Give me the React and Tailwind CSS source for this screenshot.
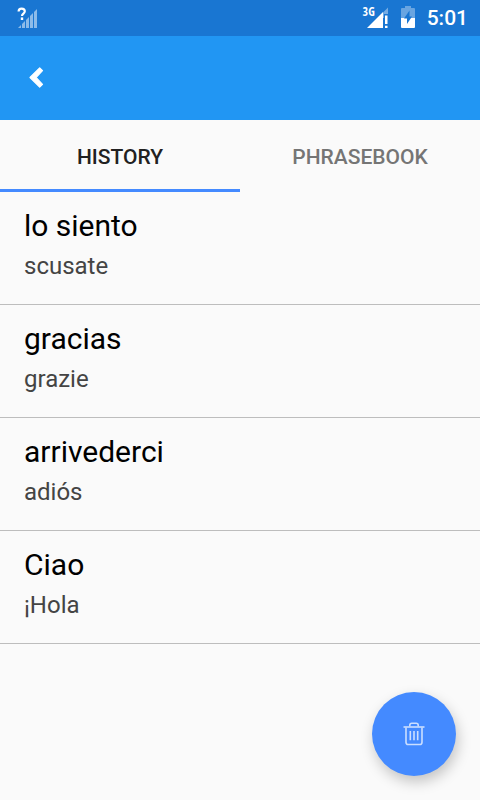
const entries = [
  { source: 'lo siento', translation: 'scusate' },
  { source: 'gracias', translation: 'grazie' },
  { source: 'arrivederci', translation: 'adiós' },
  { source: 'Ciao', translation: '¡Hola' },
];

function UnknownSignalIcon() {
  return (
    <svg width="24" height="24" viewBox="0 0 24 24" aria-hidden="true">
      <g fill="#fff" fillOpacity="0.5">
        <path d="M2 22 5 19V22Z" />
        <path d="M6 18 9 15V22H6Z" />
        <path d="M10 14 13 11V22H10Z" />
        <path d="M14 10 17 7V22H14Z" />
        <path d="M18 6 21 3V22H18Z" />
      </g>
      <path d="M2.6 5.6C2.6 3.4 3.8 2.6 5.6 2.6S8.8 3.5 8.8 5.3C8.8 7.6 6 7.6 6 10" fill="none" stroke="#fff" strokeWidth="2.2" />
      <rect x="4.8" y="11.4" width="2.4" height="2.6" fill="#fff" />
    </svg>
  );
}

function MobileSignalIcon() {
  return (
    <svg width="22" height="24" viewBox="0 0 22 24" aria-hidden="true">
      <path d="M16 6.5 21 1.5V8H17V12H16Z" fill="#fff" fillOpacity="0.4" />
      <path d="M0 22 16 6V22Z" fill="#fff" />
      <path d="M18 9.5H20.5V18H18ZM18 19.7H20.5V22H18Z" fill="#fff" />
    </svg>
  );
}

function BatteryIcon() {
  return (
    <svg width="14" height="24" viewBox="0 0 14 24" aria-hidden="true">
      <path d="M4 0H10V2H13Q14 2 14 3V12H0V3Q0 2 1 2H4Z" fill="#fff" fillOpacity="0.35" />
      <path d="M0 12H14V21Q14 22 13 22H1Q0 22 0 21Z" fill="#fff" />
      <path d="M8.5 4.5 3 12.5H6V18L11 10.5H8.5Z" fill="#1976d2" />
    </svg>
  );
}

function BackIcon() {
  return (
    <svg width="24" height="24" viewBox="0 0 24 24" aria-hidden="true">
      <path d="M15.7 1.8 18.5 4.6 12 11.5 18.5 18.4 15.7 21.2 6 11.5Z" fill="#fff" stroke="#fff" strokeWidth="1.2" strokeLinejoin="round" />
    </svg>
  );
}

function TrashIcon() {
  return (
    <svg width="24" height="24" viewBox="0 0 24 24" fill="none" stroke="#fff" strokeOpacity="0.72" strokeWidth="1.6" aria-hidden="true">
      <path d="M1.5 5H22.5" />
      <path d="M7.8 4.2V3.2Q7.8 1.2 9.8 1.2H14.2Q16.2 1.2 16.2 3.2V4.2" />
      <path d="M4 5.8V20.2Q4 22.5 6.2 22.5H17.8Q20 22.5 20 20.2V5.8" />
      <path d="M8.3 9V18.3M12 9V18.3M15.7 9V18.3" />
    </svg>
  );
}

export default function App() {
  return (
    <div className="relative min-h-screen bg-[#fafafa] font-['Roboto',sans-serif] text-black">
      <div className="flex h-9 items-center justify-between bg-[#1976d2] pr-3 pl-4 text-white">
        <UnknownSignalIcon />
        <div className="flex items-center">
          <span className="-mr-2 self-start font-['Open_Sans_Condensed','Roboto_Condensed','Roboto',sans-serif] text-xs leading-3 font-bold">3G</span>
          <MobileSignalIcon />
          <span className="ml-3 flex">
            <BatteryIcon />
          </span>
          <span className="ml-3 text-[21px] leading-6 font-medium">5:01</span>
        </div>
      </div>

      <header className="flex h-21 items-center bg-[#2196f3] px-6">
        <button type="button" aria-label="Back" className="flex">
          <BackIcon />
        </button>
      </header>

      <div role="tablist" className="grid h-18 grid-cols-2 text-[21px] leading-6 font-medium">
        <button type="button" role="tab" aria-selected="true" className="border-b-3 border-[#448aff] pt-1 text-[#212121]">
          HISTORY
        </button>
        <button type="button" role="tab" aria-selected="false" className="border-b-3 border-transparent pt-1 text-[#757575]">
          PHRASEBOOK
        </button>
      </div>

      <ul>
        {entries.map((entry) => (
          <li key={entry.source} className="border-b border-[#bdbdbd] px-6 pt-3.5 pb-4.5">
            <p className="text-[30px] leading-10">{entry.source}</p>
            <p className="text-2xl leading-10 text-[#444]">{entry.translation}</p>
          </li>
        ))}
      </ul>

      <button
        type="button"
        aria-label="Delete history"
        className="fixed right-6 bottom-6 flex size-21 items-center justify-center rounded-full bg-[#448aff] shadow-[2px_6px_14px_rgba(0,0,0,0.22)]"
      >
        <TrashIcon />
      </button>
    </div>
  );
}
